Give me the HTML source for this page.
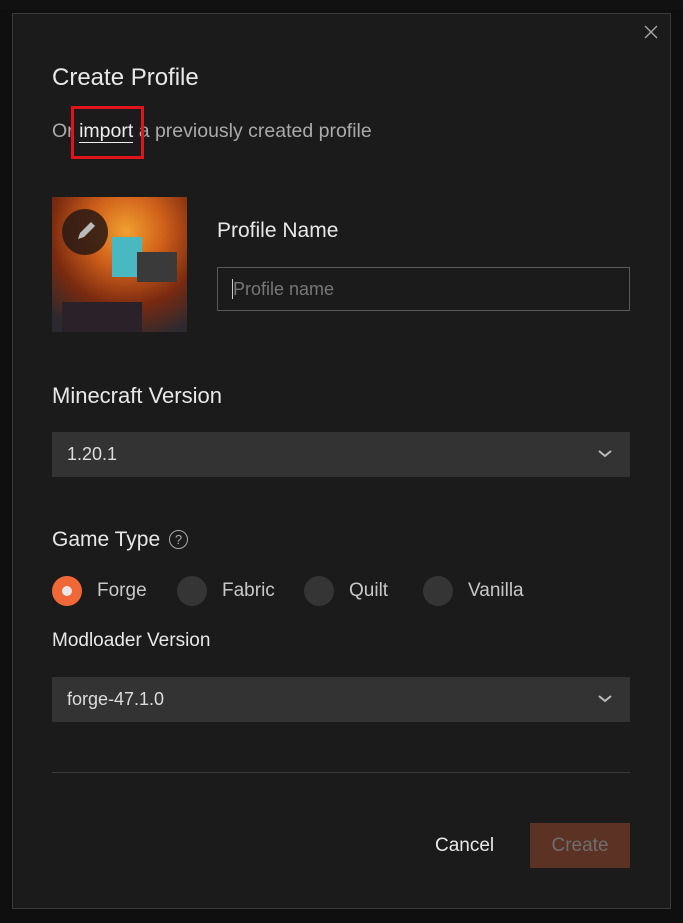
<!DOCTYPE html>
<html><head><style>
*{margin:0;padding:0;box-sizing:border-box}
body{width:683px;height:923px;background:#0f0f0f;font-family:"Liberation Sans",sans-serif;position:relative;overflow:hidden}
.bgbar{position:absolute;left:0;top:0;width:683px;height:10px;background:#111}
.modal{position:absolute;left:12px;top:13px;width:659px;height:896px;background:#1b1b1b;border:1px solid #3a3a3a}
.in{position:absolute;left:-1px;top:-1px;width:659px;height:896px}
.a{position:absolute;white-space:nowrap}
.h{color:#e8e8e8}
.sel{position:absolute;left:40px;width:578px;height:45px;background:#333;color:#ddd;font-size:18px;line-height:45px;padding-left:15px}
.chev{position:absolute;right:18px;top:17px}
.rad{position:absolute;top:563px;width:30px;height:30px;border-radius:50%;background:#353535}
.rl{position:absolute;top:567px;color:#c8c8c8;font-size:19px}
</style></head><body>
<div class="bgbar"></div>
<div class="modal"><div class="in">
<svg class="a" style="left:632px;top:12px" width="14" height="14" viewBox="0 0 14 14"><path d="M1 1L13 13M13 1L1 13" stroke="#aaa" stroke-width="1.3"/></svg>
<div class="a h" style="left:40px;top:51px;font-size:24px">Create Profile</div>
<div class="a" style="left:40px;top:107px;font-size:19.5px;color:#aaa">Or <span style="color:#eee;border-bottom:1.5px solid #eee">import</span> a previously created profile</div>
<div class="a" style="left:59px;top:93px;width:73px;height:53px;border:3px solid #e0141b"></div>
<div class="a" style="left:40px;top:184px;width:135px;height:135px;background:radial-gradient(circle at 55% 25%,#f0a030 0,#d0601a 30%,#7a2a10 60%,#2a2a30 90%)">
 <div class="a" style="left:60px;top:40px;width:30px;height:40px;background:#4ab8c0"></div>
 <div class="a" style="left:85px;top:55px;width:40px;height:30px;background:#3a3a3a"></div>
 <div class="a" style="left:10px;top:105px;width:80px;height:30px;background:#2a2228"></div>
 <div class="a" style="left:10px;top:12px;width:46px;height:46px;border-radius:50%;background:rgba(40,25,20,.85)"></div>
 <svg class="a" style="left:22px;top:22px" width="24" height="24" viewBox="0 0 24 24"><path d="M4 20L6 14L17 3L21 7L10 18Z" fill="#bbb"/></svg>
</div>
<div class="a h" style="left:205px;top:206px;font-size:21px">Profile Name</div>
<div class="a" style="left:205px;top:254px;width:413px;height:44px;border:1px solid #5a5a5a;color:#777;font-size:18px;line-height:42px;padding-left:14px"><span style="border-left:1px solid #ccc"></span>Profile name</div>
<div class="a h" style="left:40px;top:370px;font-size:22px">Minecraft Version</div>
<div class="sel" style="top:419px">1.20.1<svg class="chev" width="14" height="10" viewBox="0 0 14 10"><path d="M1 2L7 7L13 2" stroke="#bbb" stroke-width="2" fill="none"/></svg></div>
<div class="a h" style="left:40px;top:515px;font-size:21px">Game Type</div>
<div class="a" style="left:157px;top:517px;width:19px;height:19px;border:1px solid #aaa;border-radius:50%;color:#aaa;font-size:13px;text-align:center;line-height:17px">?</div>
<div class="rad" style="left:40px;background:#f06838"><div style="position:absolute;left:10px;top:10px;width:10px;height:10px;border-radius:50%;background:#e8e8e8"></div></div>
<div class="rl" style="left:85px">Forge</div>
<div class="rad" style="left:165px"></div><div class="rl" style="left:210px">Fabric</div>
<div class="rad" style="left:292px"></div><div class="rl" style="left:337px">Quilt</div>
<div class="rad" style="left:411px"></div><div class="rl" style="left:456px">Vanilla</div>
<div class="a h" style="left:40px;top:617px;font-size:19px">Modloader Version</div>
<div class="sel" style="top:664px">forge-47.1.0<svg class="chev" width="14" height="10" viewBox="0 0 14 10"><path d="M1 2L7 7L13 2" stroke="#bbb" stroke-width="2" fill="none"/></svg></div>
<div class="a" style="left:40px;top:759px;width:578px;height:1px;background:#3a3a3a"></div>
<div class="a" style="left:423px;top:822px;font-size:19px;color:#e8e8e8">Cancel</div>
<div class="a" style="left:518px;top:810px;width:100px;height:45px;background:#5b3223;color:#6e6e6e;font-size:19px;text-align:center;line-height:45px">Create</div>
</div></div>
</body></html>
